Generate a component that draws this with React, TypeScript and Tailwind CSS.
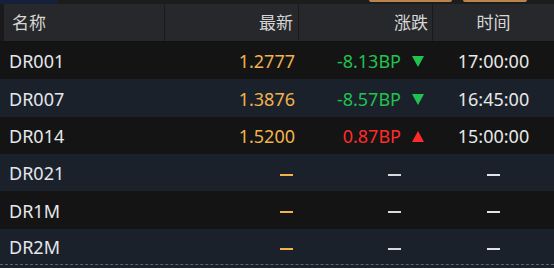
type Row = {
  name: string;
  price?: string;
  change?: string;
  dir?: "up" | "down";
  time?: string;
  bg: string;
  h: string;
};

const rows: Row[] = [
  { name: "DR001", price: "1.2777", change: "-8.13BP", dir: "down", time: "17:00:00", bg: "bg-[#141414]", h: "h-[37px]" },
  { name: "DR007", price: "1.3876", change: "-8.57BP", dir: "down", time: "16:45:00", bg: "bg-[#1b212b]", h: "h-[38px]" },
  { name: "DR014", price: "1.5200", change: "0.87BP", dir: "up", time: "15:00:00", bg: "bg-[#141414]", h: "h-[37px]" },
  { name: "DR021", bg: "bg-[#1b212b]", h: "h-[37px]" },
  { name: "DR1M", bg: "bg-[#141414]", h: "h-[38px]" },
  { name: "DR2M", bg: "bg-[#1b212b]", h: "h-[35px]" },
];

function Dash({ color }: { color: string }) {
  return <span className={`inline-block h-[2px] w-[13px] translate-y-[1px] ${color}`} />;
}

function Triangle({ dir }: { dir: "up" | "down" }) {
  return (
    <svg width="12" height="11" viewBox="0 0 12 11">
      {dir === "down" ? (
        <path d="M0 0 H12 L6 11 Z" fill="#22c24f" />
      ) : (
        <path d="M6 0 L12 11 H0 Z" fill="#ff2b2b" />
      )}
    </svg>
  );
}

export default function App() {
  return (
    <div
      className="w-[554px] h-[268px] overflow-hidden bg-[#1b212b] text-[18px]"
      style={{ fontFamily: '"Noto Sans", "Noto Sans CJK SC", sans-serif' }}
    >
      {/* top strip */}
      <div className="relative h-[4px] bg-[#1c1c1c]">
        <div className="absolute left-0 top-0 h-[4px] w-[58px] bg-[#15203a]" />
        <div className="absolute left-[369px] top-0 h-[2px] w-[83px] rounded-b bg-[#b9854c]" />
        <div className="absolute left-[463px] top-0 h-[2px] w-[64px] rounded-b bg-[#b9854c]" />
      </div>

      {/* header */}
      <div className="grid h-[38px] grid-cols-[160px_133px_133px_121px] gap-x-px border-b border-[#121212] bg-[#1a1a1a] pl-[4px] text-[17px] text-[#d6d6d6]">
        <div className="flex items-center bg-[#27282b] pl-[8px]">名称</div>
        <div className="flex items-center justify-end bg-[#27282b] pr-[5px]">最新</div>
        <div className="flex items-center justify-end bg-[#27282b] pr-[4px]">涨跌</div>
        <div className="flex items-center justify-center bg-[#27282b]">时间</div>
      </div>

      {/* rows */}
      <div className="border-b border-dashed border-[#5d636b]">
        {rows.map((r) => (
          <div key={r.name} className={`grid grid-cols-[165px_134px_134px_121px] pt-[2px] ${r.h} ${r.bg}`}>
            <div className="flex items-center pl-[9px] text-[#e4e7ec]">{r.name}</div>
            <div className="flex items-center justify-end pr-[4px] text-[#f2b24e]">
              {r.price ?? <Dash color="bg-[#f2b24e]" />}
              {!r.price && <span className="w-[2px]" />}
            </div>
            <div className="flex items-center justify-end pr-[9px]">
              {r.change ? (
                <span className={r.dir === "up" ? "text-[#ff2b2b]" : "text-[#22c24f]"}>{r.change}</span>
              ) : (
                <Dash color="bg-[#d8dadd]" />
              )}
              <span className="ml-[11px] flex w-[12px] items-center">
                {r.dir && <Triangle dir={r.dir} />}
              </span>
            </div>
            <div className="flex items-center justify-center text-[#e8e8e8]">
              {r.time ?? <Dash color="bg-[#e0e3e7]" />}
            </div>
          </div>
        ))}
      </div>
    </div>
  );
}
